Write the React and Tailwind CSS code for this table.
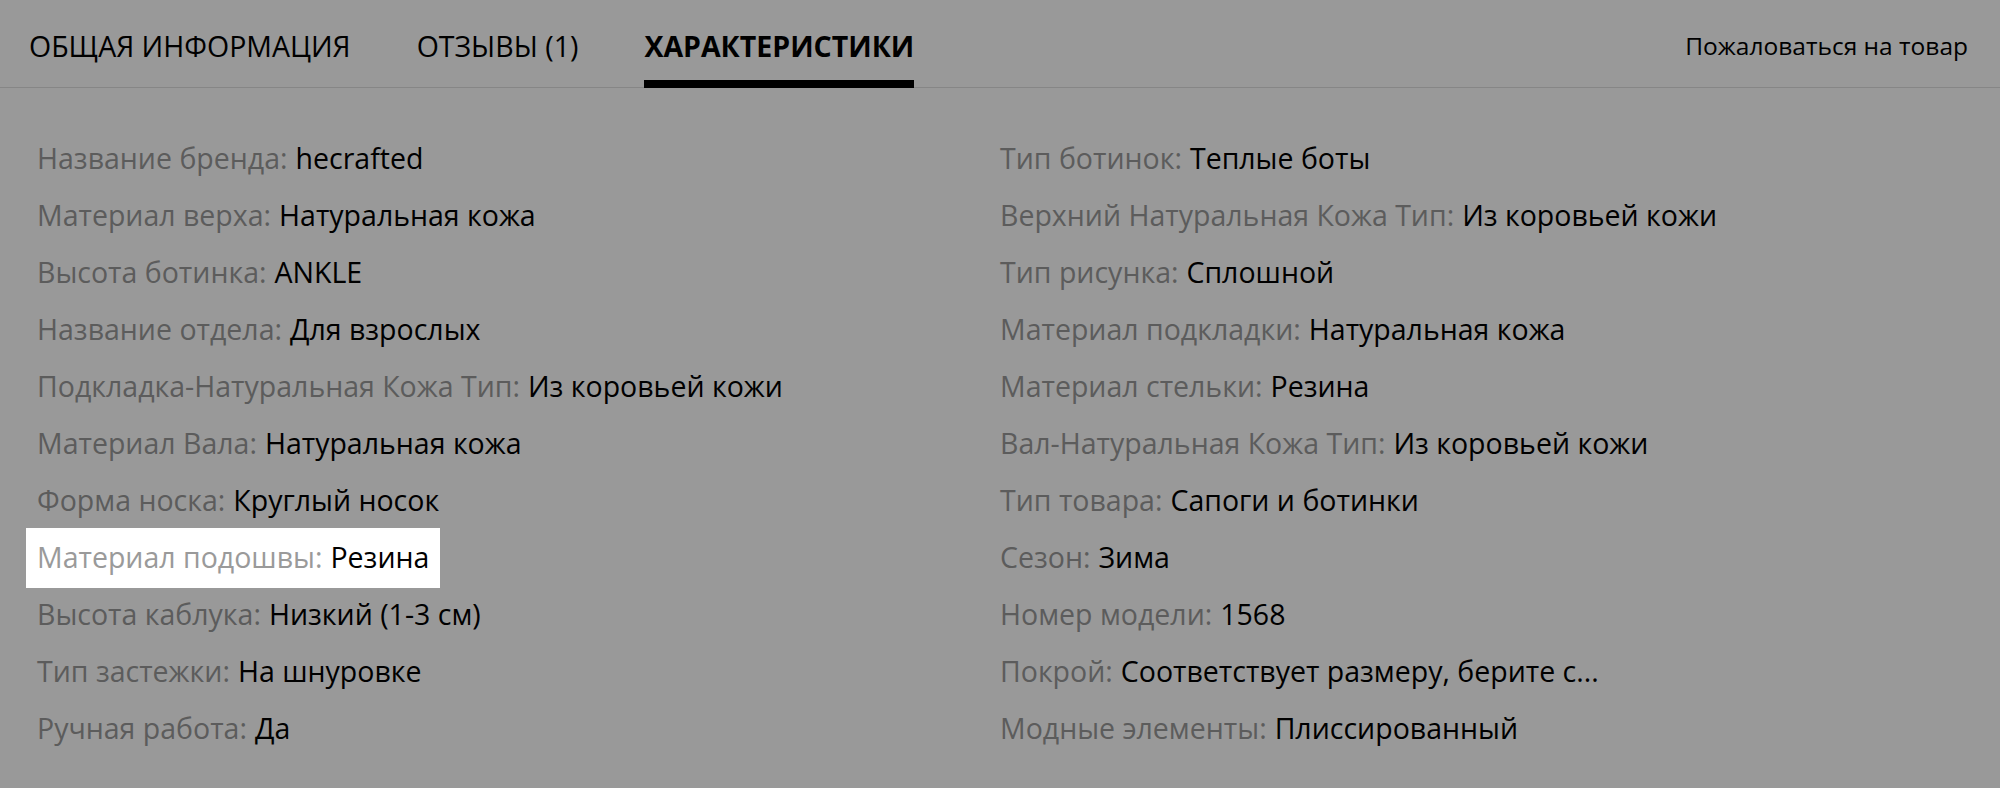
import React from 'react';

const leftSpecs = [
  ['Название бренда', 'hecrafted'],
  ['Материал верха', 'Натуральная кожа'],
  ['Высота ботинка', 'ANKLE'],
  ['Название отдела', 'Для взрослых'],
  ['Подкладка-Натуральная Кожа Тип', 'Из коровьей кожи'],
  ['Материал Вала', 'Натуральная кожа'],
  ['Форма носка', 'Круглый носок'],
  ['Материал подошвы', 'Резина', true],
  ['Высота каблука', 'Низкий (1-3 см)'],
  ['Тип застежки', 'На шнуровке'],
  ['Ручная работа', 'Да'],
];

const rightSpecs = [
  ['Тип ботинок', 'Теплые боты'],
  ['Верхний Натуральная Кожа Тип', 'Из коровьей кожи'],
  ['Тип рисунка', 'Сплошной'],
  ['Материал подкладки', 'Натуральная кожа'],
  ['Материал стельки', 'Резина'],
  ['Вал-Натуральная Кожа Тип', 'Из коровьей кожи'],
  ['Тип товара', 'Сапоги и ботинки'],
  ['Сезон', 'Зима'],
  ['Номер модели', '1568'],
  ['Покрой', 'Соответствует размеру, берите с...'],
  ['Модные элементы', 'Плиссированный'],
];

const tabs = [
  { id: 'info', label: 'ОБЩАЯ ИНФОРМАЦИЯ' },
  { id: 'reviews', label: 'ОТЗЫВЫ (1)' },
  { id: 'specs', label: 'ХАРАКТЕРИСТИКИ' },
];

function SpecRow({ label, value, highlight }) {
  return (
    <div className="h-[57px] flex items-center">
      <div
        className={`h-[60px] flex items-center px-[11px] whitespace-nowrap ${
          highlight ? 'bg-white' : ''
        }`}
      >
        <span className={highlight ? 'text-[#9a9a9a]' : 'text-[#5c5c5c]'}>{label}:</span>
        <span className="ml-[8px] text-black">{value}</span>
      </div>
    </div>
  );
}

export default function App() {
  const activeTab = 'specs';

  return (
    <div
      className="min-h-screen bg-[#999999] text-black"
      style={{ fontFamily: '"Open Sans", "Noto Sans", sans-serif' }}
    >
      {/* Tabs header */}
      <div className="h-[88px] border-b border-[#868686] flex items-start justify-between pl-[29px] pr-[32px]">
        <nav className="flex gap-[66px]">
          {tabs.map((tab) => (
            <div
              key={tab.id}
              className={`h-[88px] pt-[12px] flex items-center border-b-[8px] text-[28.5px] leading-none whitespace-nowrap ${
                activeTab === tab.id ? 'border-black font-bold' : 'border-transparent'
              }`}
            >
              {tab.label}
            </div>
          ))}
        </nav>
        <div className="h-[88px] pt-[4px] flex items-center text-[24.5px] whitespace-nowrap">
          Пожаловаться на товар
        </div>
      </div>

      {/* Specs grid */}
      <div className="pl-[26px] pt-[42px] grid grid-cols-[963px_1fr] text-[28.5px]">
        <div>
          {leftSpecs.map(([label, value, hl]) => (
            <SpecRow key={label} label={label} value={value} highlight={hl} />
          ))}
        </div>
        <div>
          {rightSpecs.map(([label, value]) => (
            <SpecRow key={label} label={label} value={value} />
          ))}
        </div>
      </div>
    </div>
  );
}
